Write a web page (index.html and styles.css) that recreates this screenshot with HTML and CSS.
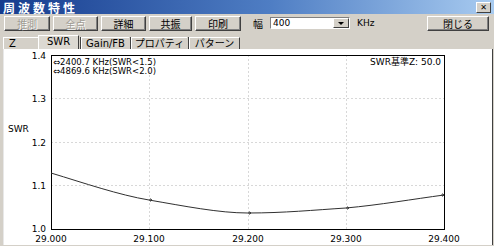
FILE: index.html
```html
<!DOCTYPE html>
<html lang="ja">
<head>
    <meta charset="UTF-8">
    <title>周波数特性</title>
    <link rel="stylesheet" href="styles.css">
</head>
<body>
    <div class="window">
        <div class="titlebar">
            <span class="title">周波数特性</span>
            <span class="close-btn">✕</span>
        </div>

        <div class="toolbar">
            <button class="btn btn-w46" disabled>推測</button>
            <button class="btn btn-w45" disabled>全点</button>
            <button class="btn btn-w45">詳細</button>
            <button class="btn btn-w43">共振</button>
            <button class="btn btn-w46">印刷</button>
            <span class="width-label">幅</span>
            <div class="combo">
                <span class="combo-value">400</span>
                <span class="combo-arrow"></span>
            </div>
            <span class="unit">KHz</span>
            <button class="btn btn-close">閉じる</button>
        </div>

        <div class="tabs">
            <span class="tab tab-z">Z</span>
            <span class="tab tab-active">SWR</span>
            <span class="tab tab-sep tab-gain">Gain/FB</span>
            <span class="tab tab-sep tab-prop">プロパティ</span>
            <span class="tab tab-sep tab-last">パターン</span>
        </div>

        <div class="panel">
            <svg class="chart" width="488" height="196" viewBox="0 0 488 196">
                <!-- grid -->
                <g class="grid">
                    <line x1="47" y1="49.5" x2="440" y2="49.5"/>
                    <line x1="47" y1="93.5" x2="440" y2="93.5"/>
                    <line x1="47" y1="136.5" x2="440" y2="136.5"/>
                    <line x1="145.5" y1="6" x2="145.5" y2="180"/>
                    <line x1="244.5" y1="6" x2="244.5" y2="180"/>
                    <line x1="342.5" y1="6" x2="342.5" y2="180"/>
                </g>
                <rect class="frame" x="47.5" y="6.5" width="393" height="174"/>

                <!-- y axis -->
                <g class="label label-end">
                    <text x="42" y="10">1.4</text>
                    <text x="42" y="53">1.3</text>
                    <text x="42" y="97">1.2</text>
                    <text x="42" y="140">1.1</text>
                    <text x="42" y="183">1.0</text>
                </g>
                <text class="label" x="4" y="83">SWR</text>

                <!-- x axis -->
                <g class="label label-mid">
                    <text x="47" y="193">29.000</text>
                    <text x="145" y="193">29.100</text>
                    <text x="244" y="193">29.200</text>
                    <text x="342" y="193">29.300</text>
                    <text x="440" y="193">29.400</text>
                </g>

                <g class="label legend">
                    <text x="49" y="16">⇔2400.7 KHz(SWR&lt;1.5)</text>
                    <text x="49" y="25">⇔4869.6 KHz(SWR&lt;2.0)</text>
                </g>
                <text class="label label-end" x="437" y="16">SWR基準Z: 50.0</text>

                <path class="curve" d="M47 124 C80 134 115 146 145 151 C180 157 215 164 244 164 C280 164 310 161 342 159 C375 156 410 150 440 146"/>
                <g class="marks">
                    <path d="M145 151 l3 0 m-2 -1.5 l2 1.5 l-2 1.5"/>
                    <path d="M244 164 l3 0 m-2 -1.5 l2 1.5 l-2 1.5"/>
                    <path d="M342 159 l3 0 m-2 -1.5 l2 1.5 l-2 1.5"/>
                    <path d="M437 146 l3 0 m-2 -1.5 l2 1.5 l-2 1.5"/>
                </g>
            </svg>
        </div>
    </div>
</body>
</html>
```

FILE: styles.css
```css
body {
    margin: 0;
    background-color: #d4d0c8;
    font-family: "DejaVu Sans", "Noto Sans CJK JP", sans-serif;
    font-size: 10px;
}
.window {
    width: 494px;
    height: 246px;
    overflow: hidden;
    background-color: #d4d0c8;
}
.titlebar {
    height: 14px;
    display: flex;
    align-items: flex-start;
    justify-content: space-between;
    padding: 0 3px 0 3px;
    background: linear-gradient(to right, #163c8e, #4f7ec4 55%, #a8cbf0);
}
.title {
    display: block;
    height: 14px;
    padding-top: 1px;
    color: white;
    font-family: "Noto Sans CJK JP", sans-serif;
    font-weight: bold;
    font-size: 12px;
    line-height: 13px;
    letter-spacing: 3px;
}
.close-btn {
    width: 13px;
    height: 9px;
    margin-top: 2px;
    line-height: 9px;
    text-align: center;
    font-size: 8px;
    font-weight: bold;
    color: black;
    background-color: #d4d0c8;
    border: 1px solid;
    border-color: #fff #404040 #404040 #fff;
}
.toolbar {
    height: 16px;
    margin-top: 1px;
    padding-left: 4px;
    display: flex;
    align-items: center;
}
.btn {
    height: 15px;
    padding: 0;
    margin-right: 3px;
    font-family: "Noto Sans CJK JP", sans-serif;
    font-size: 10px;
    line-height: 11px;
    color: #000;
    background-color: #d4d0c8;
    border: 1px solid;
    border-color: #fff #404040 #404040 #fff;
    box-shadow: inset -1px -1px 0 #808080;
}
.btn:disabled {
    color: #a09c94;
    text-shadow: 1px 1px 0 #fff;
}
.btn-w46 { width: 46px; }
.btn-w45 { width: 45px; }
.btn-w43 { width: 43px; }
.width-label {
    margin-left: 9px;
    font-family: "Noto Sans CJK JP", sans-serif;
    font-size: 10px;
}
.combo {
    width: 78px;
    height: 10px;
    margin-left: 7px;
    display: flex;
    background-color: #fff;
    border: 1px solid;
    border-color: #808080 #fff #fff #808080;
}
.combo-value {
    flex: 1;
    font-size: 9px;
    line-height: 10px;
    padding-left: 2px;
}
.combo-arrow {
    width: 14px;
    height: 8px;
    background-color: #d4d0c8;
    border: 1px solid;
    border-color: #fff #404040 #404040 #fff;
    position: relative;
}
.combo-arrow::after {
    content: "";
    position: absolute;
    left: 4px;
    top: 3px;
    border-left: 3px solid transparent;
    border-right: 3px solid transparent;
    border-top: 3px solid #000;
}
.unit {
    margin-left: 7px;
    font-size: 9px;
}
.btn-close {
    width: 62px;
    margin-left: auto;
    margin-right: 5px;
}
.tabs {
    height: 15px;
    margin-top: 3px;
    padding-left: 3px;
    display: flex;
    align-items: flex-end;
    font-size: 10px;
}
.tab {
    box-sizing: border-box;
    height: 12px;
    line-height: 11px;
    padding: 0 3px;
    white-space: nowrap;
    font-family: "DejaVu Sans", "Noto Sans CJK JP", sans-serif;
}
.tab-z {
    width: 35px;
    padding-left: 5px;
    border-left: 1px solid #fff;
    border-top: 1px solid #fff;
}
.tab-active {
    width: 41px;
    height: 14px;
    line-height: 12px;
    text-align: center;
    border-top: 1px solid #fff;
    border-left: 1px solid #fff;
    border-right: 1px solid #404040;
    background-color: #dcd9d2;
}
.tab-sep {
    text-align: center;
    padding: 0;
    border-left: 1px solid #fff;
    border-top: 1px solid #fff;
    margin-left: 2px;
    box-shadow: -1px 0 0 #404040;
}
.tab-gain { width: 48px; }
.tab-prop { width: 56px; }
.tab-last {
    width: 51px;
    border-right: 1px solid #404040;
}
.panel {
    height: 196px;
    margin-left: 3px;
    width: 488px;
    background-color: #fff;
    border-left: 1px solid #e8e8e8;
    border-right: 1px solid #404040;
}
.chart {
    display: block;
}
.grid line {
    stroke: #d8d8d8;
    stroke-width: 1;
    stroke-dasharray: 2 2;
}
.frame {
    fill: none;
    stroke: #000;
    stroke-width: 1;
}
.label {
    font-family: "DejaVu Sans", "Noto Sans CJK JP", sans-serif;
    font-size: 9px;
    fill: #000;
}
.legend {
    font-size: 8.5px;
}
.label-end {
    text-anchor: end;
}
.label-mid {
    text-anchor: middle;
}
.curve {
    fill: none;
    stroke: #303030;
    stroke-width: 1;
}
.marks path {
    fill: none;
    stroke: #303030;
    stroke-width: 0.8;
}
```
